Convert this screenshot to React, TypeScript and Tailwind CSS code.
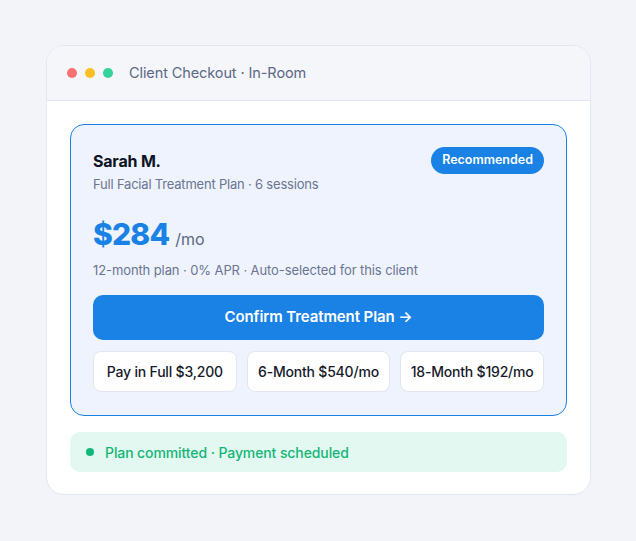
import React from 'react';

const options = ['Pay in Full $3,200', '6-Month $540/mo', '18-Month $192/mo'];

const App: React.FC = () => {
  return (
    <div
      className="w-[636px] h-[541px] bg-[#f3f4f9] pt-[45px] pl-[46px]"
      style={{ fontFamily: 'Inter, "Noto Sans", sans-serif' }}
    >
      <div className="w-[545px] h-[450px] rounded-[18px] border border-[#e2e6ef] bg-white overflow-hidden">
        {/* title bar */}
        <div className="h-[55px] bg-[#f5f6fa] border-b border-[#e2e6ef] flex items-center pl-[20px]">
          <div className="flex items-center gap-[8px]">
            <span className="w-[10px] h-[10px] rounded-full bg-[#f87171]" />
            <span className="w-[10px] h-[10px] rounded-full bg-[#fbbf24]" />
            <span className="w-[10px] h-[10px] rounded-full bg-[#34d399]" />
          </div>
          <span className="ml-[16px] text-[14.5px] text-[#5b6886] tracking-[-0.1px]">
            Client Checkout · In-Room
          </span>
        </div>

        <div className="px-[23px] pt-[23px]">
          {/* plan card */}
          <div className="rounded-[14px] border border-[#1a82e5] bg-[#eef3fe] px-[22px] pt-[22px] pb-[23px]">
            <div className="flex items-start justify-between">
              <div>
                <div className="text-[16px] font-bold text-[#0f1424] leading-[28px] tracking-[-0.2px]">Sarah M.</div>
                <div className="text-[13px] text-[#6b7590] leading-[18px] tracking-[-0.2px]">
                  Full Facial Treatment Plan · 6 sessions
                </div>
              </div>
              <span className="h-[27px] px-[11px] rounded-full bg-[#1a82e5] text-white text-[12.5px] font-semibold flex items-center">
                Recommended
              </span>
            </div>

            <div className="flex items-baseline mt-[21px]">
              <span className="text-[30px] font-extrabold text-[#1a82e5] leading-[40px] tracking-[-0.8px]">$284</span>
              <span className="ml-[6px] text-[16px] text-[#5b6886]">/mo</span>
            </div>
            <div className="mt-[7px] text-[13px] text-[#6b7590] leading-[18px] tracking-[-0.1px]">
              12-month plan · 0% APR · Auto-selected for this client
            </div>

            <button className="mt-[16px] w-full h-[45px] rounded-[10px] bg-[#1a82e5] text-white text-[15px] font-semibold tracking-[-0.1px]">
              Confirm Treatment Plan →
            </button>

            <div className="mt-[11px] grid grid-cols-3 gap-[10px]">
              {options.map((o) => (
                <div
                  key={o}
                  className="h-[41px] rounded-[8px] bg-white border border-[#e2e6ef] flex items-center justify-center text-[14px] font-medium text-[#151a2a] tracking-[-0.2px]"
                >
                  {o}
                </div>
              ))}
            </div>
          </div>

          {/* status */}
          <div className="mt-[16px] h-[40px] rounded-[10px] bg-[#e3f8f0] flex items-center pl-[16px]">
            <span className="w-[8px] h-[8px] rounded-full bg-[#10b97a]" />
            <span className="ml-[11px] text-[14px] font-medium text-[#13b577] tracking-[-0.1px]">
              Plan committed · Payment scheduled
            </span>
          </div>
        </div>
      </div>
    </div>
  );
};

export default App;
